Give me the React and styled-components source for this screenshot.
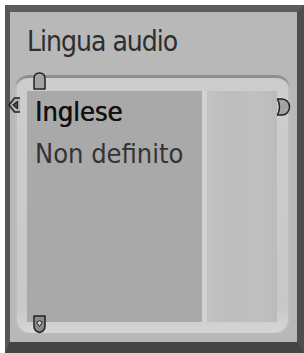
import React from 'react';
import styled, { createGlobalStyle } from 'styled-components';

const GlobalStyle = createGlobalStyle`
  body {
    margin: 0;
    background: #fff;
    font-family: 'DejaVu Sans Condensed', 'DejaVu Sans', sans-serif;
  }
`;

const Screen = styled.div`
  box-sizing: border-box;
  margin: 5px 0 0 5px;
  width: 299px;
  height: 348px;
  border-style: solid;
  border-width: 7px 7px 11px 5px;
  border-color: #5c5c5c #4e4e4e #444 #555;
  background: #b8b8b8;
  padding: 13px 7px 9px 5px;
  display: flex;
  flex-direction: column;
`;

const Title = styled.div`
  font-size: 28px;
  line-height: 34px;
  letter-spacing: -1px;
  color: #2e2e2e;
  padding-left: 12px;
`;

const ListFrame = styled.div`
  position: relative;
  flex: 1;
  margin-top: 16px;
  border-radius: 14px;
  border-top: 3px solid #8f8f8f;
  background: linear-gradient(to bottom, #cdcdcd, #c8c8c8 90%, #d6d6d6);
  padding: 13px 13px 11px 12px;
  display: flex;
  box-shadow: inset 2px 0 0 #bdbdbd, inset -2px 0 0 #bdbdbd;
`;

const Columns = styled.div`
  flex: 1;
  display: grid;
  grid-template-columns: 175px 5px 1fr;
`;

const ItemColumn = styled.div`
  background: #a9a9a9;
  padding-left: 8px;
`;

const Divider = styled.div`
  background: #d2d2d2;
`;

const SideColumn = styled.div`
  background: linear-gradient(to right, #c3c3c3, #bdbdbd 30%, #c0c0c0 70%, #bbbbbb);
`;

const Item = styled.div`
  font-size: 27px;
  line-height: 42px;
  white-space: nowrap;
  color: ${({ selected }) => (selected ? '#111' : '#333')};
  text-shadow: ${({ selected }) => (selected ? '0.6px 0 0 #111' : 'none')};
`;

const Nav = styled.svg`
  position: absolute;
  left: ${({ x }) => x}px;
  top: ${({ y }) => y}px;
`;

const stroke = { fill: '#a3a3a3', stroke: '#222', strokeWidth: 1.5, strokeLinejoin: 'round' };

const UpIcon = () => (
  <Nav x={17} y={-7} width="15" height="20" viewBox="0 0 15 20">
    <path d="M2 18 V8 Q2 2 7.5 2 Q13 2 13 8 V18 Z" {...stroke} />
  </Nav>
);

const LeftIcon = () => (
  <Nav x={-8} y={18} width="15" height="18" viewBox="0 0 15 18">
    <path d="M13 2 H7.5 L2 9 L7.5 16 H13" {...stroke} fill="#b0b0b0" />
    <path d="M10.5 5.5 L6 9 L10.5 12.5 Z" {...stroke} fill="#555" strokeWidth="1.2" />
  </Nav>
);

const RightIcon = () => (
  <Nav x={260} y={19} width="16" height="20" viewBox="0 0 16 20">
    <path d="M2.5 2 H7 A7.5 8 0 0 1 7 18 H2.5 Q6.5 10 2.5 2 Z" {...stroke} />
  </Nav>
);

const DownIcon = () => (
  <Nav x={17} y={236} width="15" height="20" viewBox="0 0 15 20">
    <path d="M2 2 H13 V12 Q13 17 7.5 18.5 Q2 17 2 12 Z" {...stroke} fill="#8a8a8a" />
    <path d="M4.5 8 Q7.5 5.5 10.5 8 L7.5 12.5 Z" fill="#d0d0d0" stroke="#222" strokeWidth="1" />
  </Nav>
);

const items = ['Inglese', 'Non definito'];

const App = () => (
  <>
    <GlobalStyle />
    <Screen>
      <Title>Lingua audio</Title>
      <ListFrame>
        <Columns>
          <ItemColumn>
            {items.map((label, i) => (
              <Item key={label} selected={i === 0}>
                {label}
              </Item>
            ))}
          </ItemColumn>
          <Divider />
          <SideColumn />
        </Columns>
        <UpIcon />
        <LeftIcon />
        <RightIcon />
        <DownIcon />
      </ListFrame>
    </Screen>
  </>
);

export default App;
